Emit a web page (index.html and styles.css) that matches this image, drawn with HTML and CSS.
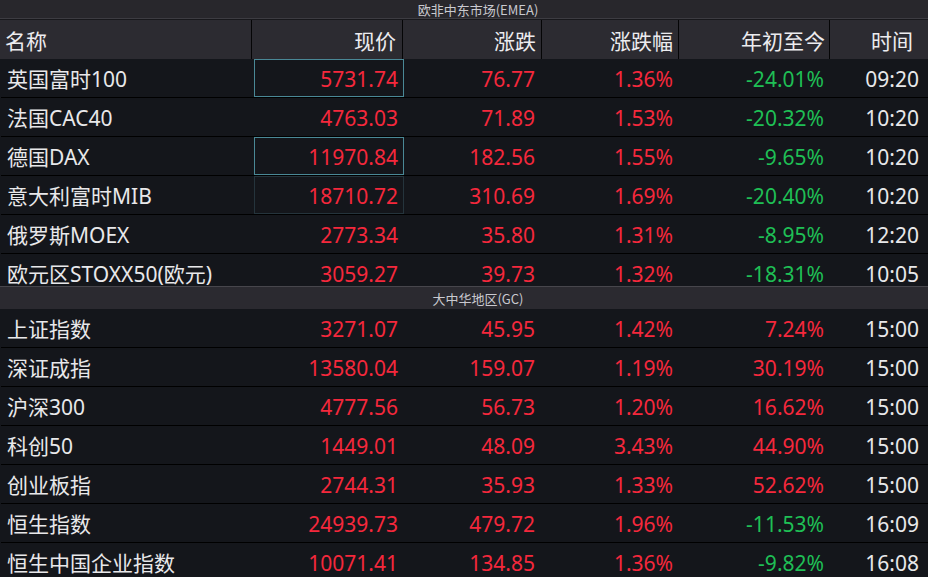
FILE: index.html
```html
<!DOCTYPE html>
<html lang="zh-CN">
<head>
<meta charset="utf-8">
<title>全球指数</title>
<link rel="stylesheet" href="styles.css">
</head>
<body>
<div class="board">
  <div class="bar bar-top">欧非中东市场(EMEA)</div>
  <div class="head">
    <div class="hc c1">名称</div>
    <div class="hc c2">现价</div>
    <div class="hc c3">涨跌</div>
    <div class="hc c4">涨跌幅</div>
    <div class="hc c5">年初至今</div>
    <div class="hc c6">时间</div>
  </div>
  <div class="section emea">
    <div class="row"><div class="name">英国富时100</div><div class="num c2 flash">5731.74</div><div class="num c3 up">76.77</div><div class="num c4 up">1.36%</div><div class="num c5 down">-24.01%</div><div class="num c6">09:20</div></div>
    <div class="row"><div class="name">法国CAC40</div><div class="num c2">4763.03</div><div class="num c3 up">71.89</div><div class="num c4 up">1.53%</div><div class="num c5 down">-20.32%</div><div class="num c6">10:20</div></div>
    <div class="row"><div class="name">德国DAX</div><div class="num c2 flash">11970.84</div><div class="num c3 up">182.56</div><div class="num c4 up">1.55%</div><div class="num c5 down">-9.65%</div><div class="num c6">10:20</div></div>
    <div class="row"><div class="name">意大利富时MIB</div><div class="num c2 fade">18710.72</div><div class="num c3 up">310.69</div><div class="num c4 up">1.69%</div><div class="num c5 down">-20.40%</div><div class="num c6">10:20</div></div>
    <div class="row"><div class="name">俄罗斯MOEX</div><div class="num c2">2773.34</div><div class="num c3 up">35.80</div><div class="num c4 up">1.31%</div><div class="num c5 down">-8.95%</div><div class="num c6">12:20</div></div>
    <div class="row"><div class="name">欧元区STOXX50(欧元)</div><div class="num c2">3059.27</div><div class="num c3 up">39.73</div><div class="num c4 up">1.32%</div><div class="num c5 down">-18.31%</div><div class="num c6">10:05</div></div>
  </div>
  <div class="bar bar-mid">大中华地区(GC)</div>
  <div class="section gc">
    <div class="row"><div class="name">上证指数</div><div class="num c2">3271.07</div><div class="num c3 up">45.95</div><div class="num c4 up">1.42%</div><div class="num c5 up">7.24%</div><div class="num c6">15:00</div></div>
    <div class="row"><div class="name">深证成指</div><div class="num c2">13580.04</div><div class="num c3 up">159.07</div><div class="num c4 up">1.19%</div><div class="num c5 up">30.19%</div><div class="num c6">15:00</div></div>
    <div class="row"><div class="name">沪深300</div><div class="num c2">4777.56</div><div class="num c3 up">56.73</div><div class="num c4 up">1.20%</div><div class="num c5 up">16.62%</div><div class="num c6">15:00</div></div>
    <div class="row"><div class="name">科创50</div><div class="num c2">1449.01</div><div class="num c3 up">48.09</div><div class="num c4 up">3.43%</div><div class="num c5 up">44.90%</div><div class="num c6">15:00</div></div>
    <div class="row"><div class="name">创业板指</div><div class="num c2">2744.31</div><div class="num c3 up">35.93</div><div class="num c4 up">1.33%</div><div class="num c5 up">52.62%</div><div class="num c6">15:00</div></div>
    <div class="row"><div class="name">恒生指数</div><div class="num c2">24939.73</div><div class="num c3 up">479.72</div><div class="num c4 up">1.96%</div><div class="num c5 down">-11.53%</div><div class="num c6">16:09</div></div>
    <div class="row"><div class="name">恒生中国企业指数</div><div class="num c2">10071.41</div><div class="num c3 up">134.85</div><div class="num c4 up">1.36%</div><div class="num c5 down">-9.82%</div><div class="num c6">16:08</div></div>
  </div>
</div>
</body>
</html>
```

FILE: styles.css
```css
html, body {
  margin: 0;
  padding: 0;
  background: #14161b;
  overflow: hidden;
}
.board {
  width: 928px;
  height: 577px;
  overflow: hidden;
  font-family: "Noto Sans CJK SC", "Noto Sans", sans-serif;
  color: #e8e8ea;
  background: #14161b;
}
.bar {
  display: flex;
  align-items: center;
  justify-content: center;
  padding-left: 28px;
  font-size: 13px;
  color: #c9c9cf;
  background: #28272c;
  line-height: 1;
}
.bar-top {
  height: 18px;
  border-bottom: 1px solid #3d3c42;
}
.bar-mid {
  height: 22px;
  border-top: 1px solid #47464c;
  background: #2b2a30;
}
.head {
  display: grid;
  grid-template-columns: 252px 151px 139px 137px 151px 1fr;
  height: 39px;
  background: #2c2b31;
  border-top: 1px solid #18181c;
  font-size: 21px;
}
.hc {
  display: flex;
  align-items: center;
  justify-content: flex-end;
  border-right: 1px solid #050506;
  padding-right: 5px;
  color: #ececef;
}
.hc.c1 {
  justify-content: flex-start;
  padding-left: 5px;
}
.hc.c2 { padding-right: 6px; }
.hc.c5 { padding-right: 4px; }
.hc.c6 {
  border-right: none;
  padding-right: 15px;
}
.section.emea {
  height: 227px;
  overflow: hidden;
}
.row {
  display: grid;
  grid-template-columns: 252px 151px 139px 137px 151px 1fr;
  height: 38px;
  border-bottom: 1px solid #000;
  margin-left: 1px;
  font-size: 21px;
  background: #14161b;
}
.name {
  display: flex;
  align-items: center;
  padding-left: 6px;
  padding-bottom: 1px;
  white-space: nowrap;
  font-family: "Noto Sans", "Noto Sans CJK SC", sans-serif;
  color: #e8e8ea;
}
.num {
  display: flex;
  align-items: center;
  justify-content: flex-end;
  padding-right: 8px;
  padding-top: 1px;
  font-family: "Noto Sans", "Noto Sans CJK SC", sans-serif;
  color: #e8e8ea;
}
.num.c2 {
  color: #f5283c;
  padding-right: 5px;
  border: 1px solid transparent;
  margin-left: 1px;
}
.num.c3 { padding-right: 8px; }
.num.c4 { padding-right: 7px; }
.num.c5 { padding-right: 7px; }
.num.c6 { padding-right: 9px; }
.num.c2.flash { border-color: #4a8896; }
.num.c2.fade { border-color: #25343c; }
.up { color: #f5283c !important; }
.down { color: #1fbf55 !important; }
```
